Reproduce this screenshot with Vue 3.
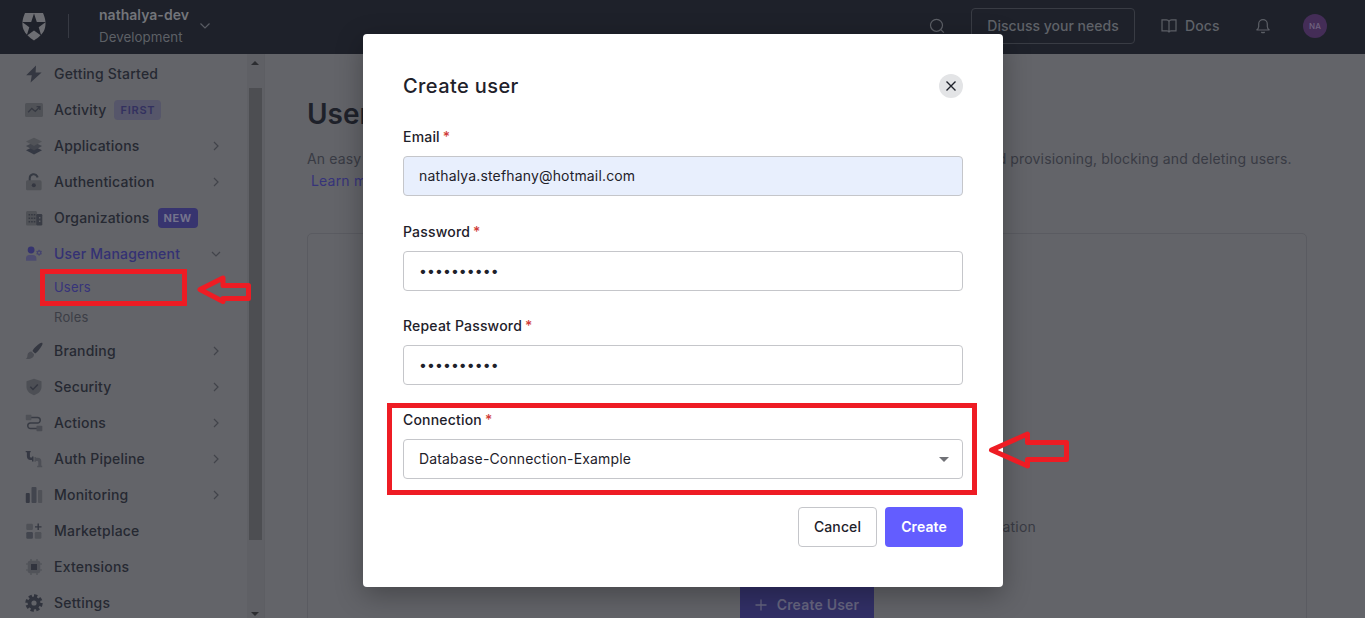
<script setup>
const nav = [
  { icon: 'bolt', label: 'Getting Started' },
  { icon: 'activity', label: 'Activity', badge: 'FIRST', tone: 'soft' },
  { icon: 'layers', label: 'Applications', arrow: 'right' },
  { icon: 'lock', label: 'Authentication', arrow: 'right' },
  { icon: 'org', label: 'Organizations', badge: 'NEW', tone: 'solid' },
  { icon: 'user', label: 'User Management', arrow: 'down', active: true, children: ['Users', 'Roles'] },
  { icon: 'brush', label: 'Branding', arrow: 'right' },
  { icon: 'shield', label: 'Security', arrow: 'right' },
  { icon: 'actions', label: 'Actions', arrow: 'right' },
  { icon: 'pipeline', label: 'Auth Pipeline', arrow: 'right' },
  { icon: 'bars', label: 'Monitoring', arrow: 'right' },
  { icon: 'market', label: 'Marketplace' },
  { icon: 'chip', label: 'Extensions' },
  { icon: 'gear', label: 'Settings' },
]

const icons = {
  bolt: '<path fill="#343741" d="M11 0.6 1.2 10.2h5.6L5.6 17.4 16.6 7.4h-6z"/>',
  activity: '<rect x="0" y="2" width="18" height="14" rx="1.6" fill="#505257"/><path d="M3.2 11.3 6.8 7.4l3.5 3L14.6 6M11.6 5.6h3.3v3.3" fill="none" stroke="#363942" stroke-width="1.3"/>',
  layers: '<path fill="#343843" d="m1 13.200 8-3.800 8 3.800-8 4.200z"/><path fill="#42454d" d="m1 9 8-3.800L17 9l-8 4.400z"/><path fill="#515358" d="m9 .8 8 3.800L9 9 1 4.600z"/>',
  lock: '<path d="M4.7 8V5.2a4 4 0 0 1 7.6-1.7l.2 1" fill="none" stroke="#363a43" stroke-width="2"/><rect x="1" y="7.3" width="15.6" height="10" rx="1.6" fill="#505257"/><circle cx="8.8" cy="12.3" r="2" fill="#343741"/>',
  org: '<rect x="1" y="2" width="11" height="14.5" rx="1.5" fill="#505257"/><path d="M3.6 5h1.5v1.5H3.6zm2.6 0h1.5v1.5H6.2zm2.6 0h1.5v1.5H8.800zM3.600 8.500h1.500V10H3.600zm2.600 0h1.500V10H6.200zm2.600 0h1.500V10H8.800zM3.600 12h1.500v1.500H3.600zm2.600 0h1.500v1.500H6.200zm2.600 0h1.500v1.500H8.800z" fill="#353841"/><rect x="11.300" y="5" width="6" height="11.500" rx="1.200" fill="#393c45"/><path d="M14 8h1.400v1.400H14zm0 3.500h1.400v1.400H14z" fill="#606167"/>',
  user: '<circle cx="6.100" cy="5" r="3.400" fill="#36346f"/><path d="M1 15.700v-2A3.600 3.600 0 0 1 4.600 10h3.200a3.600 3.600 0 0 1 3.600 3.700v2z" fill="#4d4c70"/><circle cx="14.100" cy="7.700" r="1.700" fill="none" stroke="#45446f" stroke-width="1.300"/><path d="M14.100 4.700v1.300m0 3.400v1.300m-2.600-4.500 1.100.6m3 1.700 1.100.6m0-2.900-1.100.6m-3 1.700-1.100.6" stroke="#45446f" stroke-width="1.100"/>',
  brush: '<path fill="#343741" d="M17.200.8c.7.600.2 2.300-1.200 4.300-1.800 2.700-4.100 5.600-5.900 6.400L7.500 9C8.700 6.300 12.500 2.800 15 1.300c.8-.5 1.700-.9 2.200-.5z"/><path fill="#4a4c53" d="M6.300 9.600 9 12.200c.2 3.200-3.500 5.400-8.100 4.700 1.700-.9 1.300-2.300 1.700-4.300.4-1.700 1.900-2.900 3.700-3z"/>',
  shield: '<path fill="#4d4f55" d="m9 .8 7.500 2.500v5.500c0 4-3 7-7.500 8.500-4.500-1.500-7.500-4.500-7.500-8.500V3.300z"/><path d="m5.300 8.800 2.700 2.700 4.800-5" fill="none" stroke="#343741" stroke-width="1.500"/>',
  actions: '<path d="M6 3.500h6.500a2.750 2.750 0 0 1 0 5.500h-7a2.750 2.750 0 0 0 0 5.500H12" fill="none" stroke="#383b44" stroke-width="1.500"/><rect x=".8" y=".8" width="5.600" height="5.400" rx=".8" fill="#4f5157"/><rect x="11.500" y="11.700" width="5.800" height="5.600" rx=".8" fill="#4a4c53"/>',
  pipeline: '<path fill="#353843" d="M.700.900h5v1.300h-.8v4.200c0 .7.4 1.100 1.100 1.100h1v-.9h1.500v4.800H7V10H5.600C3.200 10 1.900 8.600 1.900 6.300V2.200H.700z"/><path fill="#4d4f56" d="M9.500 7h1.300v.8h2c2.300 0 3.500 1.400 3.500 3.600v4.400h.9v1.400h-5v-1.400h1.100v-3.700c0-.8-.4-1.200-1.100-1.200h-1.400v.9H9.500z"/>',
  bars: '<rect x=".800" y="7" width="4" height="10" rx="1" fill="#363943"/><rect x="6.500" y=".900" width="5" height="16.200" rx="1" fill="#42454e"/><rect x="13" y="4" width="4.200" height="13" rx="1" fill="#4f5157"/>',
  market: '<rect x="1.300" y="1.800" width="6.600" height="6.300" rx="1.300" fill="#4f5157"/><rect x="1.300" y="9.900" width="6.600" height="6.900" rx="1.300" fill="#42454e"/><rect x="9.800" y="9.900" width="6.600" height="6.900" rx="1.300" fill="#4f5157"/><path d="M13.200 1.600v6.500M10 4.900h6.500" stroke="#343741" stroke-width="1.400"/>',
  chip: '<path d="M6 1v16M12 1v16M1 6h16M1 12h16" stroke="#4e5056" stroke-width="1.200"/><rect x="2.800" y="2.800" width="12.400" height="12.400" rx="2" fill="#515359"/><rect x="6" y="6" width="6" height="6" fill="#31343e"/>',
  gear: '<path fill="none" stroke="#31343e" stroke-width="3.400" stroke-dasharray="3.200 2.298" d="M9 2a7 7 0 1 1 0 14A7 7 0 0 1 9 2"/><circle cx="9" cy="9" r="4.500" fill="none" stroke="#31343e" stroke-width="3.800"/>',
}

const fields = [
  { label: 'Email', value: 'nathalya.stefhany@hotmail.com', kind: 'filled' },
  { label: 'Password', value: '••••••••••', kind: 'secret' },
  { label: 'Repeat Password', value: '••••••••••', kind: 'secret' },
  { label: 'Connection', value: 'Database-Connection-Example', kind: 'select' },
]
</script>

<template>
  <div class="page">
    <header class="topbar">
      <svg class="logo" width="26" height="28" viewBox="0 0 26 28">
        <path fill="#6d6e73" d="M4 0h18c2.300 5 3.600 11 1.500 16.500C21.800 21 17.500 24.500 13 27.500 8.500 24.500 4.200 21 2.500 16.500.400 11 1.700 5 4 0z" />
        <path fill="#1e212a" d="m13 .500 2.800 8.500h9l-7.100 5.300 2.600 8.500-7.300-5.200-7.300 5.200 2.600-8.500L1.200 9h9z" />
      </svg>
      <span class="divider"></span>
      <div class="tenant"><b>nathalya-dev</b><span>Development</span></div>
      <svg class="caret" width="12" height="12" viewBox="0 0 12 12" fill="none" stroke="#595c63" stroke-width="1.200"><path d="m1.500 3.500 4.500 4.500 4.500-4.500" /></svg>
      <div class="tools">
        <svg width="16" height="16" viewBox="0 0 16 16" fill="none" stroke="#5c5f66" stroke-width="1.200"><circle cx="7.500" cy="7.300" r="6" /><path d="m11.800 11.600 3 3" /></svg>
        <span class="discuss">Discuss your needs</span>
        <span class="docs">
          <svg width="16" height="16" viewBox="0 0 16 16" fill="none" stroke="#5c5f66" stroke-width="1.200"><path d="M8 3.500C7.500 2.300 6.700 1.800 5.500 1.800H1v11.100h5c1.200 0 2 .6 2 1.600 0-1 .8-1.600 2-1.600h5V1.800h-4.500C9.300 1.800 8.500 2.300 8 3.500zm0 0v11" /></svg>
          Docs
        </span>
        <svg class="bell" width="16" height="16" viewBox="0 0 16 16" fill="none" stroke="#5c5f66" stroke-width="1.200"><path d="M1.500 12c1.700-.8 2.200-2 2.200-3.500V6a4.300 4.300 0 0 1 8.600 0v2.500c0 1.500.5 2.700 2.200 3.500zM6.300 14c.8.900 2.600.9 3.400 0" /></svg>
        <span class="avatar">NA</span>
      </div>
    </header>

    <div class="body">
      <aside class="sidebar">
        <nav class="menu">
          <div v-for="item in nav" :key="item.label" class="group">
            <div class="item" :class="{ active: item.active }">
              <svg class="icon" width="18" height="18" viewBox="0 0 18 18" v-html="icons[item.icon]"></svg>
              <span class="name">{{ item.label }}</span>
              <span v-if="item.badge" class="badge" :class="item.tone">{{ item.badge }}</span>
              <svg v-if="item.arrow" class="chev" :class="item.arrow" width="10" height="10" viewBox="0 0 10 10" fill="none" stroke="#42444b" stroke-width="1.200"><path d="m3 1 4 4-4 4" /></svg>
            </div>
            <div v-if="item.children" class="children">
              <span v-for="(child, i) in item.children" :key="child" :class="{ current: i === 0 }">{{ child }}</span>
            </div>
          </div>
        </nav>
        <div class="scroll">
          <i class="up"></i>
          <div class="thumb"></div>
          <i class="down"></i>
        </div>
      </aside>

      <main class="content">
        <h1>Users</h1>
        <p class="intro">An easy to use UI to help administrators manage user identities including password resets, creating and provisioning, blocking and deleting users.</p>
        <a class="learn">Learn more</a>
        <section class="card">
          <p class="empty">application</p>
          <span class="add">
            <svg width="12" height="12" viewBox="0 0 12 12" stroke="#666580" stroke-width="1.300"><path d="M6 .500v11M.500 6h11" /></svg>
            Create User
          </span>
        </section>
      </main>
    </div>

    <div class="modal">
      <div class="head">
        <h2>Create user</h2>
        <span class="close"><svg width="12" height="12" viewBox="0 0 12 12" stroke="#1e212a" stroke-width="1.400"><path d="m1.500 1.500 9 9m0-9-9 9" /></svg></span>
      </div>
      <div v-for="f in fields" :key="f.label" class="field">
        <label>{{ f.label }}<em>*</em></label>
        <div class="input" :class="f.kind"><span>{{ f.value }}</span><i v-if="f.kind === 'select'"></i></div>
      </div>
      <div class="buttons">
        <span class="btn cancel">Cancel</span>
        <span class="btn create">Create</span>
      </div>
    </div>

    <div class="mark mark-users"></div>
    <div class="mark mark-connection"></div>
    <svg class="arrow-users" width="58" height="32" viewBox="0 0 58 32"><path d="M4 16.500 27 5v7.500h25.500v13H27V28.500z" fill="none" stroke="#ee1c24" stroke-width="5" stroke-linejoin="round" /></svg>
    <svg class="arrow-connection" width="84" height="42" viewBox="0 0 84 42"><path d="M3.500 21 39.500 5v8.500h39v17h-39V37z" fill="none" stroke="#ee1c24" stroke-width="5" stroke-linejoin="round" /></svg>
  </div>
</template>

<style>
body { margin: 0; overflow: hidden; }
</style>

<style scoped>
.page { position: relative; width: 1365px; height: 618px; overflow: hidden; background: #636469; color: #1e212a; font: 400 14px/20px Inter, sans-serif; letter-spacing: .2px; }
.page * { box-sizing: border-box; }
.page svg { display: block; flex: none; }
.topbar { height: 54px; background: #1e212a; display: flex; align-items: center; padding: 0 38px 0 21px; color: #5f6268; }
.logo { margin-top: -1px; }
.divider { width: 1px; height: 24px; background: #373a43; margin: 0 30px 2px 21px; }
.tenant { display: flex; flex-direction: column; width: 90px; line-height: 22px; margin-bottom: 2px; white-space: nowrap; }
.tenant b { font-weight: 600; color: #73757a; letter-spacing: .03px; }
.tenant span { color: #5d6066; font-size: 13.300px; letter-spacing: .05px; }
.caret { margin-left: 10px; margin-bottom: 2px; }
.tools { margin-left: auto; display: flex; align-items: center; font-weight: 500; margin-bottom: 2px; }
.discuss { width: 164px; height: 36px; border: 1px solid #393c44; border-radius: 4px; display: flex; align-items: center; justify-content: center; margin: 0 26px; white-space: nowrap; letter-spacing: 0; }
.docs { display: flex; align-items: center; gap: 8px; width: 94px; letter-spacing: .1px; }
.bell { margin-right: 32px; }
.avatar { width: 24px; height: 24px; border-radius: 50%; background: #442d57; color: #716480; font: 500 8px/24px Inter, sans-serif; text-align: center; }
.body { display: flex; height: 564px; }
.sidebar { width: 265px; display: flex; border-right: 1px solid #5d5e63; overflow: hidden; }
.menu { flex: 1; padding: 2px 26px 0 25px; }
.item { height: 36px; display: flex; align-items: center; font-weight: 500; color: #262932; white-space: nowrap; }
.icon { margin-right: 11px; }
.active { color: #343174; }
.badge { height: 20px; border-radius: 4px; padding: 0 6px; margin-left: 8px; font-size: 11px; line-height: 20px; letter-spacing: .75px; font-weight: 600; }
.soft { background: #56566a; color: #33315f; }
.solid { background: #37346f; color: #74738c; font-weight: 700; letter-spacing: .6px; }
.chev { margin-left: auto; }
.chev.down { transform: rotate(90deg); }
.children { padding-left: 29px; margin-bottom: 1px; color: #3c3e46; font-size: 13px; }
.children span { display: block; height: 30px; line-height: 30px; }
.children .current { color: #36337a; }
.scroll { width: 17px; background: #5f6065; display: flex; flex-direction: column; align-items: center; padding: 7px 0 0; }
.scroll i { border: 4px solid transparent; margin-right: 1px; }
.scroll .up { border-top: 0; border-bottom-color: #2c2d31; }
.scroll .down { border-bottom: 0; border-top-color: #2c2d31; margin-top: 72px; }
.thumb { width: 13px; height: 452px; margin-top: 23px; background: #4d4e52; flex: none; }
.content { width: 1000px; margin-left: 42px; padding-top: 43px; color: #393b44; }
h1 { margin: 0; font: 600 28px/34px Inter, sans-serif; letter-spacing: 0; color: #1e212a; }
.intro { margin: 17px 0 0; line-height: 22px; white-space: nowrap; letter-spacing: .17px; word-spacing: -.2px; }
.learn { display: block; line-height: 22px; padding-left: 4px; color: #36337a; }
.card { margin-top: 41px; height: 500px; border: 1px solid #5a5b61; border-radius: 5px; display: flex; flex-direction: column; align-items: center; padding-top: 283px; }
.empty { width: 458px; margin: 0; text-align: right; }
.add { width: 134px; height: 40px; margin-top: 48px; background: #323067; color: #666580; font-weight: 600; display: flex; align-items: center; justify-content: center; gap: 10px; white-space: nowrap; flex: none; }
.modal { position: absolute; left: 363px; top: 34px; width: 640px; height: 553px; padding: 40px; border-radius: 4px; background: #fff; box-shadow: 0 8px 28px rgba(0, 0, 0, .3); color: #1e212a; }
.head { display: flex; justify-content: space-between; height: 24px; align-items: center; margin-bottom: 29.300px; }
h2 { margin: 0; font: 500 20px/24px Inter, sans-serif; letter-spacing: .4px; }
.close { width: 24px; height: 24px; border-radius: 50%; background: #e3e4e6; display: flex; align-items: center; justify-content: center; }
.field { margin-bottom: 25.330px; }
label { display: block; height: 20px; margin-bottom: 9px; font-weight: 500; letter-spacing: .19px; }
em { color: #d03c38; font-style: normal; margin-left: 3px; }
.input { height: 40px; border: 1px solid #c5c6ca; border-radius: 4px; padding: 0 15px; display: flex; align-items: center; justify-content: space-between; letter-spacing: .16px; }
.filled { background: #e8effd; }
.secret { letter-spacing: .1px; }
.select i { border: 5px solid transparent; border-top-color: #707176; border-bottom: 0; margin-right: -2px; }
.buttons { display: flex; justify-content: flex-end; gap: 8px; margin-top: 27.500px; }
.btn { height: 40px; width: 78px; border-radius: 4px; display: flex; align-items: center; justify-content: center; font-weight: 500; letter-spacing: .1px; }
.cancel { width: 79px; border: 1px solid #c5c6ca; }
.create { background: #635dff; color: #fff; font-weight: 600; }
.mark { position: absolute; border: 5px solid #ee1c24; }
.mark-users { left: 40px; top: 269px; width: 147px; height: 37px; }
.mark-connection { left: 387px; top: 403px; width: 590px; height: 92px; }
.arrow-users { position: absolute; left: 196px; top: 273px; }
.arrow-connection { position: absolute; left: 988px; top: 429px; }
</style>
